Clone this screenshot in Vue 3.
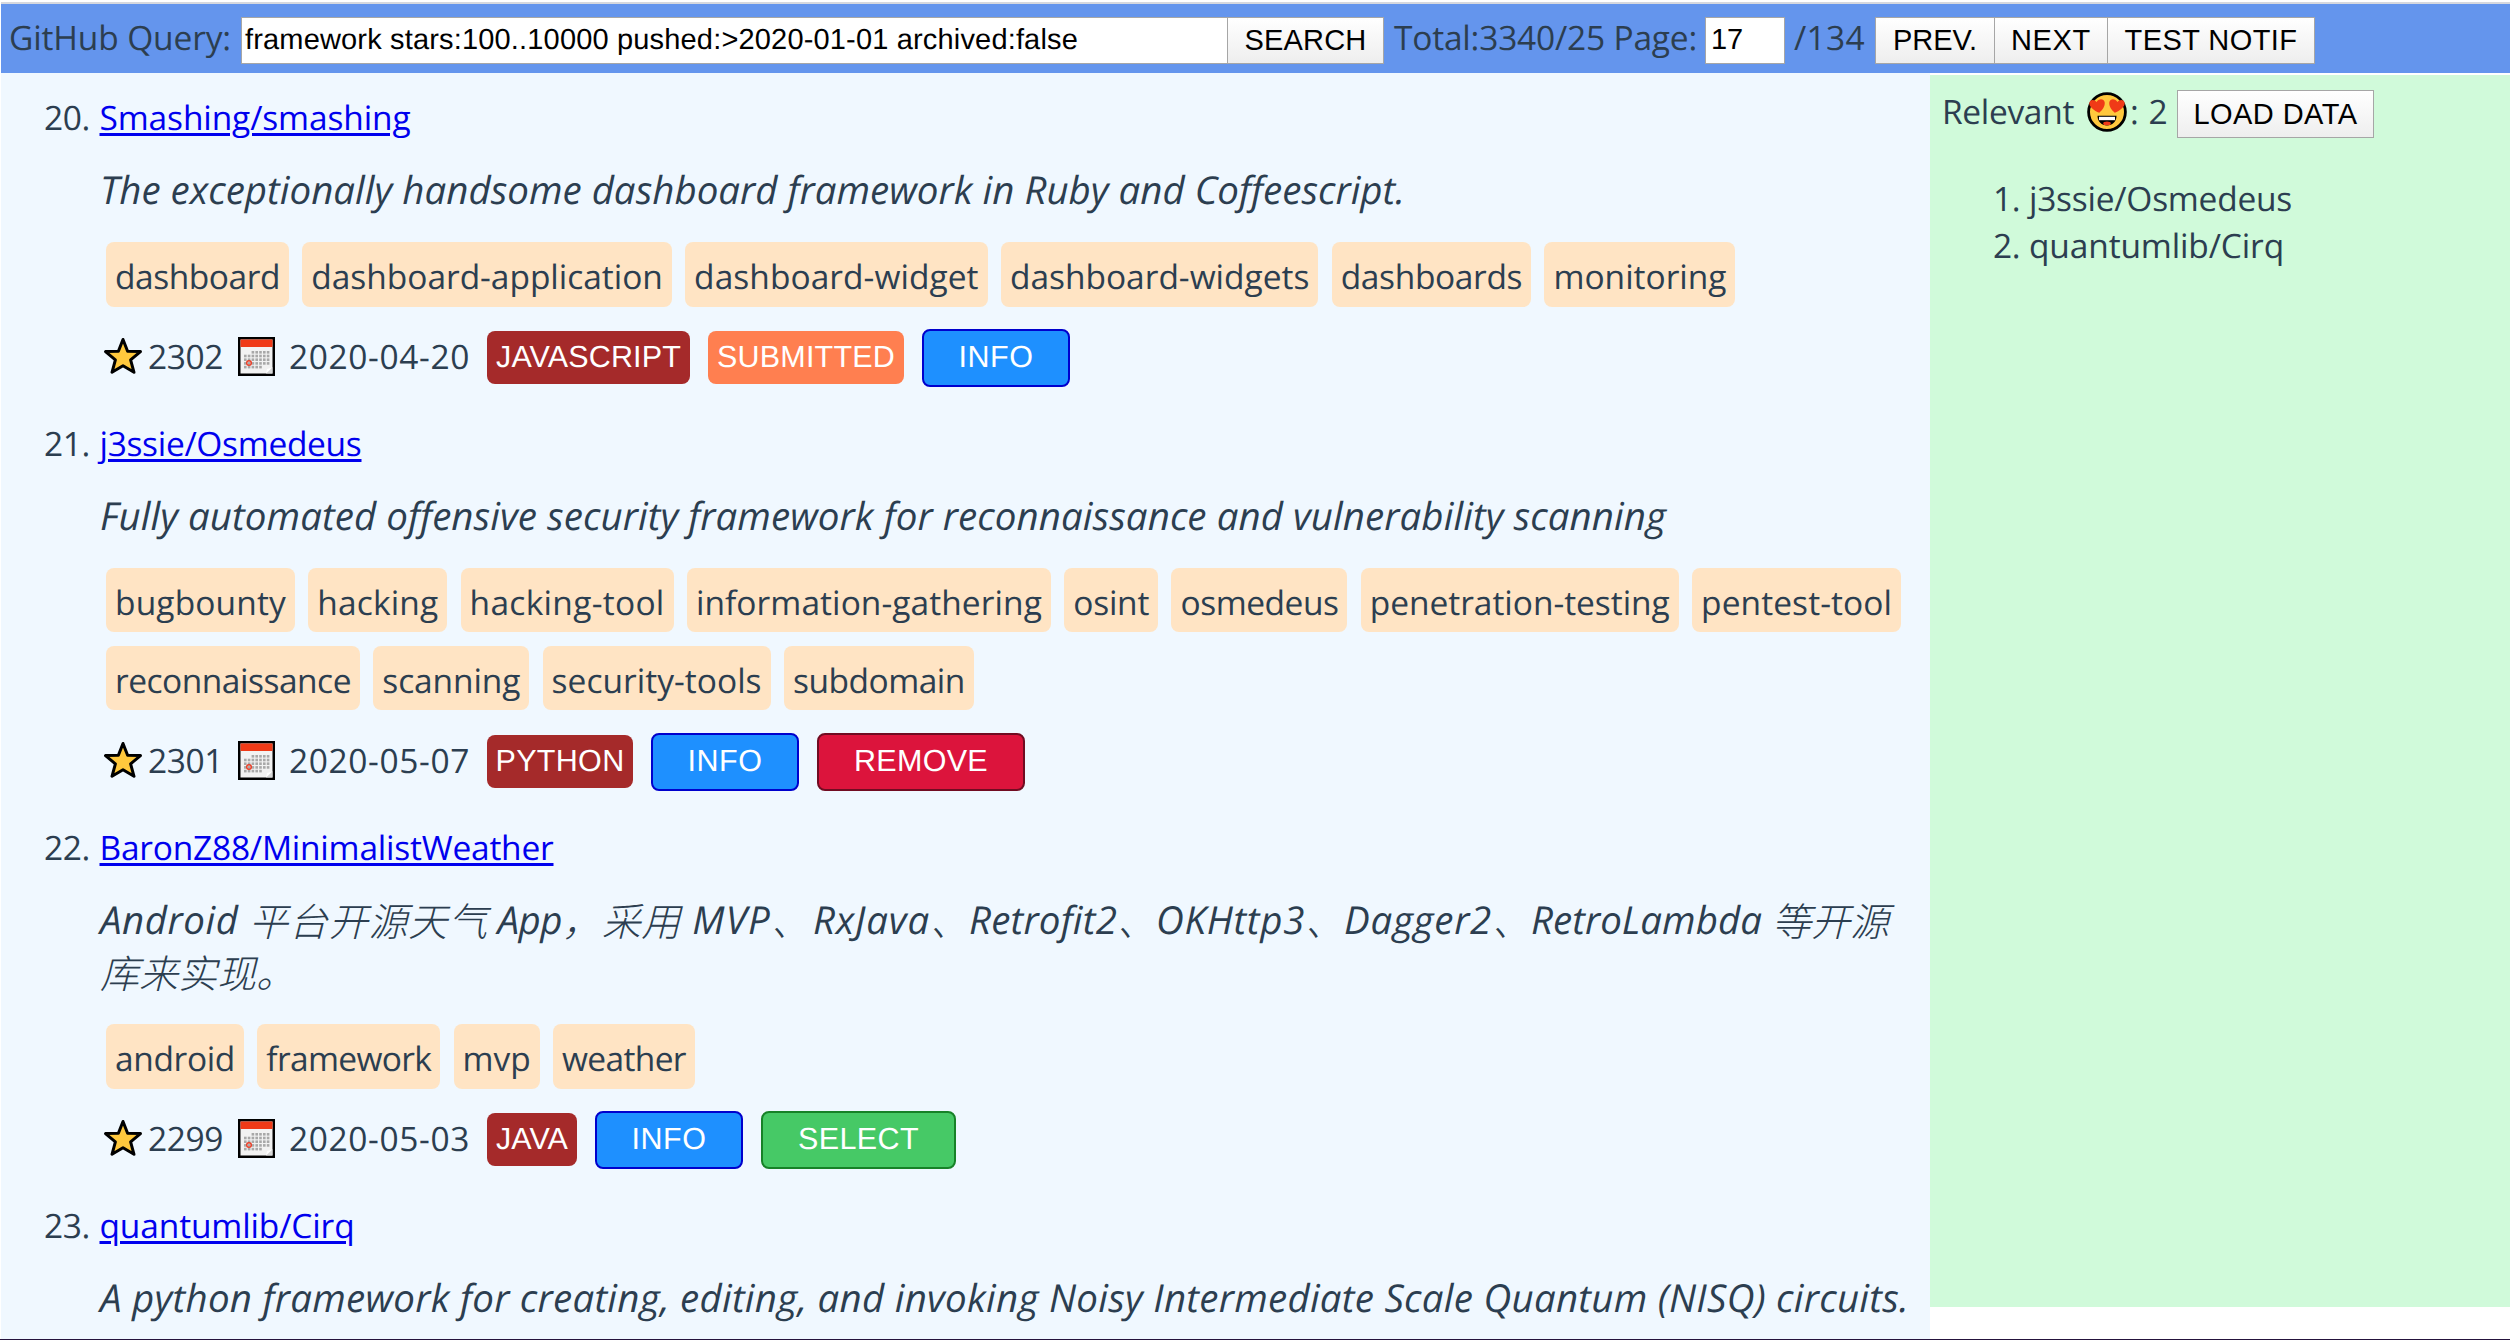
<script setup>
// Spreads the letters of an element so that its line is exactly `value` pixels wide.
const vFit = {
  mounted(el, { value }) {
    const natural = el.getBoundingClientRect().width
    const count = [...el.textContent].length
    el.style.letterSpacing = (value - natural) / count + 'px'
  }
}

const query = 'framework stars:100..10000 pushed:>2020-01-01 archived:false'

const pager = [
  { label: 'PREV.', width: 120, text: 84 },
  { label: 'NEXT', width: 114, text: 80 },
  { label: 'TEST NOTIF', width: 208, text: 173 }
]

const repos = [
  {
    no: '20.',
    name: 'Smashing/smashing',
    width: 311,
    desc: [[{ t: 'The exceptionally handsome dashboard framework in Ruby and Coffeescript.', w: 1305 }]],
    tags: [
      [
        ['dashboard', 183], ['dashboard-application', 369.5], ['dashboard-widget', 302.5],
        ['dashboard-widgets', 317.5], ['dashboards', 199.5], ['monitoring', 191]
      ]
    ],
    stars: '2302',
    date: '2020-04-20',
    badges: [
      { label: 'JAVASCRIPT', kind: 'lang', width: 203, text: 185 },
      { label: 'SUBMITTED', kind: 'submitted', width: 196, text: 178 },
      { label: 'INFO', kind: 'info', width: 148, text: 75 }
    ]
  },
  {
    no: '21.',
    name: 'j3ssie/Osmedeus',
    width: 262,
    desc: [[{ t: 'Fully automated offensive security framework for reconnaissance and vulnerability scanning', w: 1566 }]],
    tags: [
      [
        ['bugbounty', 189], ['hacking', 139], ['hacking-tool', 213], ['information-gathering', 364],
        ['osint', 94], ['osmedeus', 176], ['penetration-testing', 318], ['pentest-tool', 209]
      ],
      [['reconnaissance', 254], ['scanning', 156], ['security-tools', 228], ['subdomain', 190]]
    ],
    stars: '2301',
    date: '2020-05-07',
    badges: [
      { label: 'PYTHON', kind: 'lang', width: 146, text: 129 },
      { label: 'INFO', kind: 'info', width: 148, text: 75 },
      { label: 'REMOVE', kind: 'remove', width: 208, text: 134 }
    ]
  },
  {
    no: '22.',
    name: 'BaronZ88/MinimalistWeather',
    width: 454,
    desc: [
      [
        { t: 'Android ', w: 149 }, { t: '平台开源天气', w: 239, zh: true }, { t: ' App', w: 74 },
        { t: '，采用', w: 119, zh: true }, { t: ' MVP', w: 90 }, { t: '、', w: 42, zh: true },
        { t: 'RxJava', w: 117 }, { t: '、', w: 39, zh: true }, { t: 'Retrofit2', w: 148 },
        { t: '、', w: 39, zh: true }, { t: 'OKHttp3', w: 149 }, { t: '、', w: 39, zh: true },
        { t: 'Dagger2', w: 148 }, { t: '、', w: 39, zh: true }, { t: 'RetroLambda ', w: 241 },
        { t: '等开源', w: 117, zh: true }
      ],
      [{ t: '库来实现。', w: 195, zh: true }]
    ],
    tags: [[['android', 138], ['framework', 183], ['mvp', 86], ['weather', 142]]],
    stars: '2299',
    date: '2020-05-03',
    badges: [
      { label: 'JAVA', kind: 'lang', width: 90, text: 72 },
      { label: 'INFO', kind: 'info', width: 148, text: 75 },
      { label: 'SELECT', kind: 'select', width: 195, text: 121 }
    ]
  },
  {
    no: '23.',
    name: 'quantumlib/Cirq',
    width: 255,
    desc: [[{ t: 'A python framework for creating, editing, and invoking Noisy Intermediate Scale Quantum (NISQ) circuits.', w: 1809 }]],
    tags: []
  }
]

const relevant = [
  { no: '1.', name: 'j3ssie/Osmedeus', width: 263 },
  { no: '2.', name: 'quantumlib/Cirq', width: 255 }
]

const dots = []
for (let r = 0; r < 5; r++) {
  for (let c = 0; c < 7; c++) {
    if ((r === 0 && c < 2) || (r === 4 && c > 4)) continue
    dots.push({ x: 6 + c * 3.8, y: 14 + r * 3.7 })
  }
}
</script>

<template>
  <div class="page">
    <header class="bar">
      <div class="label"><span v-fit="222">GitHub Query:</span></div>
      <div class="field query"><span v-fit="833">{{ query }}</span></div>
      <button class="btn search"><span v-fit="122">SEARCH</span></button>
      <div class="label total"><span v-fit="303">Total:3340/25 Page:</span></div>
      <div class="field pageno"><span v-fit="32">17</span></div>
      <div class="label pages"><span v-fit="71">/134</span></div>
      <div class="pager">
        <button v-for="b in pager" :key="b.label" class="btn" :style="{ width: b.width + 'px' }">
          <span v-fit="b.text">{{ b.label }}</span>
        </button>
      </div>
    </header>

    <div class="body">
      <main class="results">
        <article v-for="r in repos" :key="r.no" class="repo">
          <div class="title">
            <span class="no"><span v-fit="46">{{ r.no }}</span></span>
            <a v-fit="r.width" href="#">{{ r.name }}</a>
          </div>
          <div class="desc">
            <div v-for="(line, i) in r.desc" :key="i" class="line">
              <span v-for="(s, j) in line" :key="j" v-fit="s.w" :class="{ zh: s.zh }">{{ s.t }}</span>
            </div>
          </div>
          <div v-if="r.tags.length" class="tags">
            <div v-for="(row, i) in r.tags" :key="i" class="tagrow">
              <div v-for="t in row" :key="t[0]" class="tag" :style="{ width: t[1] + 'px' }">
                <span v-fit="t[1] - 18">{{ t[0] }}</span>
              </div>
            </div>
          </div>
          <div v-if="r.stars" class="meta">
            <svg class="star" width="40" height="38" viewBox="0 0 40 38">
              <path d="M20 2.5 24.6 14.2 37.5 14.6 27.6 22.8 31 35.3 20 28.8 9 35.3 12.4 22.8 2.5 14.6 15.4 14.2Z" fill="#ffc83d" stroke="#000" stroke-width="3" stroke-linejoin="round" />
            </svg>
            <span class="stars"><span v-fit="75">{{ r.stars }}</span></span>
            <svg class="calendar" width="37" height="39" viewBox="0 0 37 39">
              <rect x="1.25" y="1.25" width="34.5" height="36.5" fill="#f2f2f2" stroke="#000" stroke-width="2.5" />
              <rect x="2.5" y="2.5" width="32" height="7.5" fill="#f03a17" />
              <rect v-for="(d, i) in dots" :key="i" :x="d.x" :y="d.y" width="2.6" height="2.6" fill="#a8a8a8" />
              <circle cx="11" cy="26" r="2.3" fill="none" stroke="#e8412a" stroke-width="1.5" />
              <path d="M34.5 30 28 36.5h6.5z" fill="#d8d8d8" />
              <path d="M34.3 30.5 29 32l-1 4.5z" fill="#fff" />
            </svg>
            <span class="date"><span v-fit="181">{{ r.date }}</span></span>
            <div class="badges">
              <div v-for="b in r.badges" :key="b.label" class="badge" :class="b.kind" :style="{ width: b.width + 'px' }">
                <span v-fit="b.text">{{ b.label }}</span>
              </div>
            </div>
          </div>
        </article>
      </main>

      <aside class="side">
        <div class="sidehead">
          <span v-fit="132">Relevant</span>
          <svg class="smile" width="40" height="40" viewBox="0 0 40 40">
            <circle cx="20" cy="20" r="18.4" fill="#ffc83d" stroke="#000" stroke-width="2.8" />
            <path d="M12.3 20.8C7 18.5 2.3 15 2.3 11.2 2.3 7.5 7.5 6.6 9.6 10 11.5 6.3 17 6.3 17.7 10.3 18.2 14.5 15.5 17.7 12.3 20.8Z" fill="#f03a17" />
            <path d="M27.7 20.8C33 18.5 37.7 15 37.7 11.2 37.7 7.5 32.5 6.6 30.4 10 28.5 6.3 23 6.3 22.3 10.3 21.8 14.5 24.5 17.7 27.7 20.8Z" fill="#f03a17" />
            <path d="M10.5 23.8h19c0 6-4.2 9.6-9.5 9.6s-9.5-3.6-9.5-9.6z" fill="#000" />
            <path d="M12 24.8h16v3.4H12z" fill="#fff" />
            <ellipse cx="20" cy="31.4" rx="3.8" ry="1.9" fill="#f03a17" />
          </svg>
          <span class="count"><span v-fit="38">: 2</span></span>
          <button class="btn load"><span v-fit="164">LOAD DATA</span></button>
        </div>
        <div class="picked">
          <div v-for="p in relevant" :key="p.no" class="pick">
            <span class="pickno"><span v-fit="27">{{ p.no }}</span></span>
            <span v-fit="p.width">{{ p.name }}</span>
          </div>
        </div>
      </aside>
    </div>
  </div>
</template>

<style>
body {
  background: #fff;
}
</style>

<style scoped>
.page {
  box-sizing: border-box;
  width: 2510px;
  height: 1340px;
  overflow: hidden;
  padding: 2px 0 0 1px;
  display: flex;
  flex-direction: column;
  border-bottom: 1px solid #25133d;
  background: #fff;
  color: #2c3e50;
  font-family: "Open Sans", "Noto Sans", "Noto Sans CJK SC", sans-serif;
  font-size: 33.5px;
  line-height: 48px;
  text-rendering: geometricPrecision;
  white-space: nowrap;
}
span,
a {
  flex: none;
  white-space: pre;
}
.bar {
  flex: none;
  box-sizing: border-box;
  height: 71px;
  padding: 13px 0 0 8px;
  border-top: 2px solid #d6d8de;
  background: #6495ed;
  display: flex;
  align-items: flex-start;
}
.label {
  width: 232px;
  margin-top: -4px;
}
.total {
  width: 311px;
  margin-left: 10px;
}
.pages {
  width: 81px;
  margin-left: 9px;
}
.field,
.btn {
  box-sizing: border-box;
  height: 47px;
  display: flex;
  align-items: center;
  font: 29px/33px "Liberation Sans", Arial, sans-serif;
  color: #000;
  border: 1px solid #a6a6a6;
  border-radius: 0;
}
.field {
  background: #fff;
  padding-left: 3px;
}
.query {
  width: 987px;
}
.btn {
  justify-content: center;
  padding: 0;
  margin: 0;
  background: linear-gradient(#fff, #eeeeee);
}
.search {
  width: 157px;
  margin-left: -1px;
}
.pageno {
  width: 80px;
  padding-left: 5px;
}
.pager {
  display: flex;
}
.pager .btn + .btn {
  margin-left: -1px;
}
.body {
  flex: 1;
  min-height: 0;
  display: flex;
  align-items: flex-start;
}
.results {
  flex: none;
  box-sizing: border-box;
  width: 1929px;
  height: 1266px;
  overflow: hidden;
  padding: 20px 0 0 43px;
  background: #f0f8ff;
}
.repo {
  margin-bottom: 32px;
}
.title {
  display: flex;
}
.no {
  width: 55.5px;
}
.title a {
  color: #0000ee;
  text-decoration: underline;
  text-decoration-thickness: 3px;
  text-underline-offset: 3px;
}
.desc {
  margin: 23px 0 25.3px 56px;
  font-size: 38.5px;
  line-height: 52.6px;
  font-style: italic;
}
.line {
  display: flex;
  height: 52.6px;
}
.zh {
  font-family: "Noto Sans CJK SC", sans-serif;
  font-weight: 300;
  font-size: 39px;
}
.tags {
  display: flex;
  flex-direction: column;
  gap: 13.3px;
  margin: 0 0 22.2px 62px;
}
.tagrow {
  display: flex;
  gap: 13.3px;
}
.tag {
  box-sizing: border-box;
  height: 64.7px;
  padding: 10.2px 0 0 9px;
  border-radius: 8px;
  background: #ffe4c4;
}
.meta {
  display: flex;
  align-items: center;
  height: 58px;
  margin-left: 60px;
}
.star {
  flex: none;
  margin: -4px 0 0 -1px;
}
.stars {
  width: 89px;
  margin: -4px 0 0 5px;
}
.calendar {
  flex: none;
  margin: -3px 0 0 1px;
}
.date {
  width: 198px;
  margin: -4px 0 0 14px;
}
.badges {
  display: flex;
  align-items: center;
  gap: 18px;
}
.badge {
  box-sizing: border-box;
  height: 53px;
  margin-top: -1px;
  display: flex;
  align-items: center;
  justify-content: center;
  border-radius: 8px;
  color: #fff;
  font: 30.5px/33px "Liberation Sans", Arial, sans-serif;
}
.lang {
  background: #a52a2a;
}
.submitted {
  background: #ff7f50;
}
.info,
.remove,
.select {
  height: 58px;
  margin-top: 0;
  padding-bottom: 1px;
  border: 2px solid;
}
.info {
  background: #1e90ff;
  border-color: #0000cd;
}
.remove {
  background: #dc143c;
  border-color: #710c22;
}
.select {
  background: #46c966;
  border-color: #178228;
}
.side {
  flex: 1;
  box-sizing: border-box;
  height: 1232px;
  margin-top: 2px;
  padding: 12px 0 0 12px;
  background: #d0fada;
}
.sidehead {
  display: flex;
  align-items: flex-start;
}
.smile {
  flex: none;
  margin: 5px 0 0 13px;
}
.count {
  width: 47px;
  margin-left: 3px;
}
.load {
  width: 197px;
  height: 48px;
  margin-top: 3px;
}
.picked {
  margin: 37px 0 0 51px;
  line-height: 47px;
}
.pick {
  display: flex;
}
.pickno {
  width: 36px;
}
</style>
